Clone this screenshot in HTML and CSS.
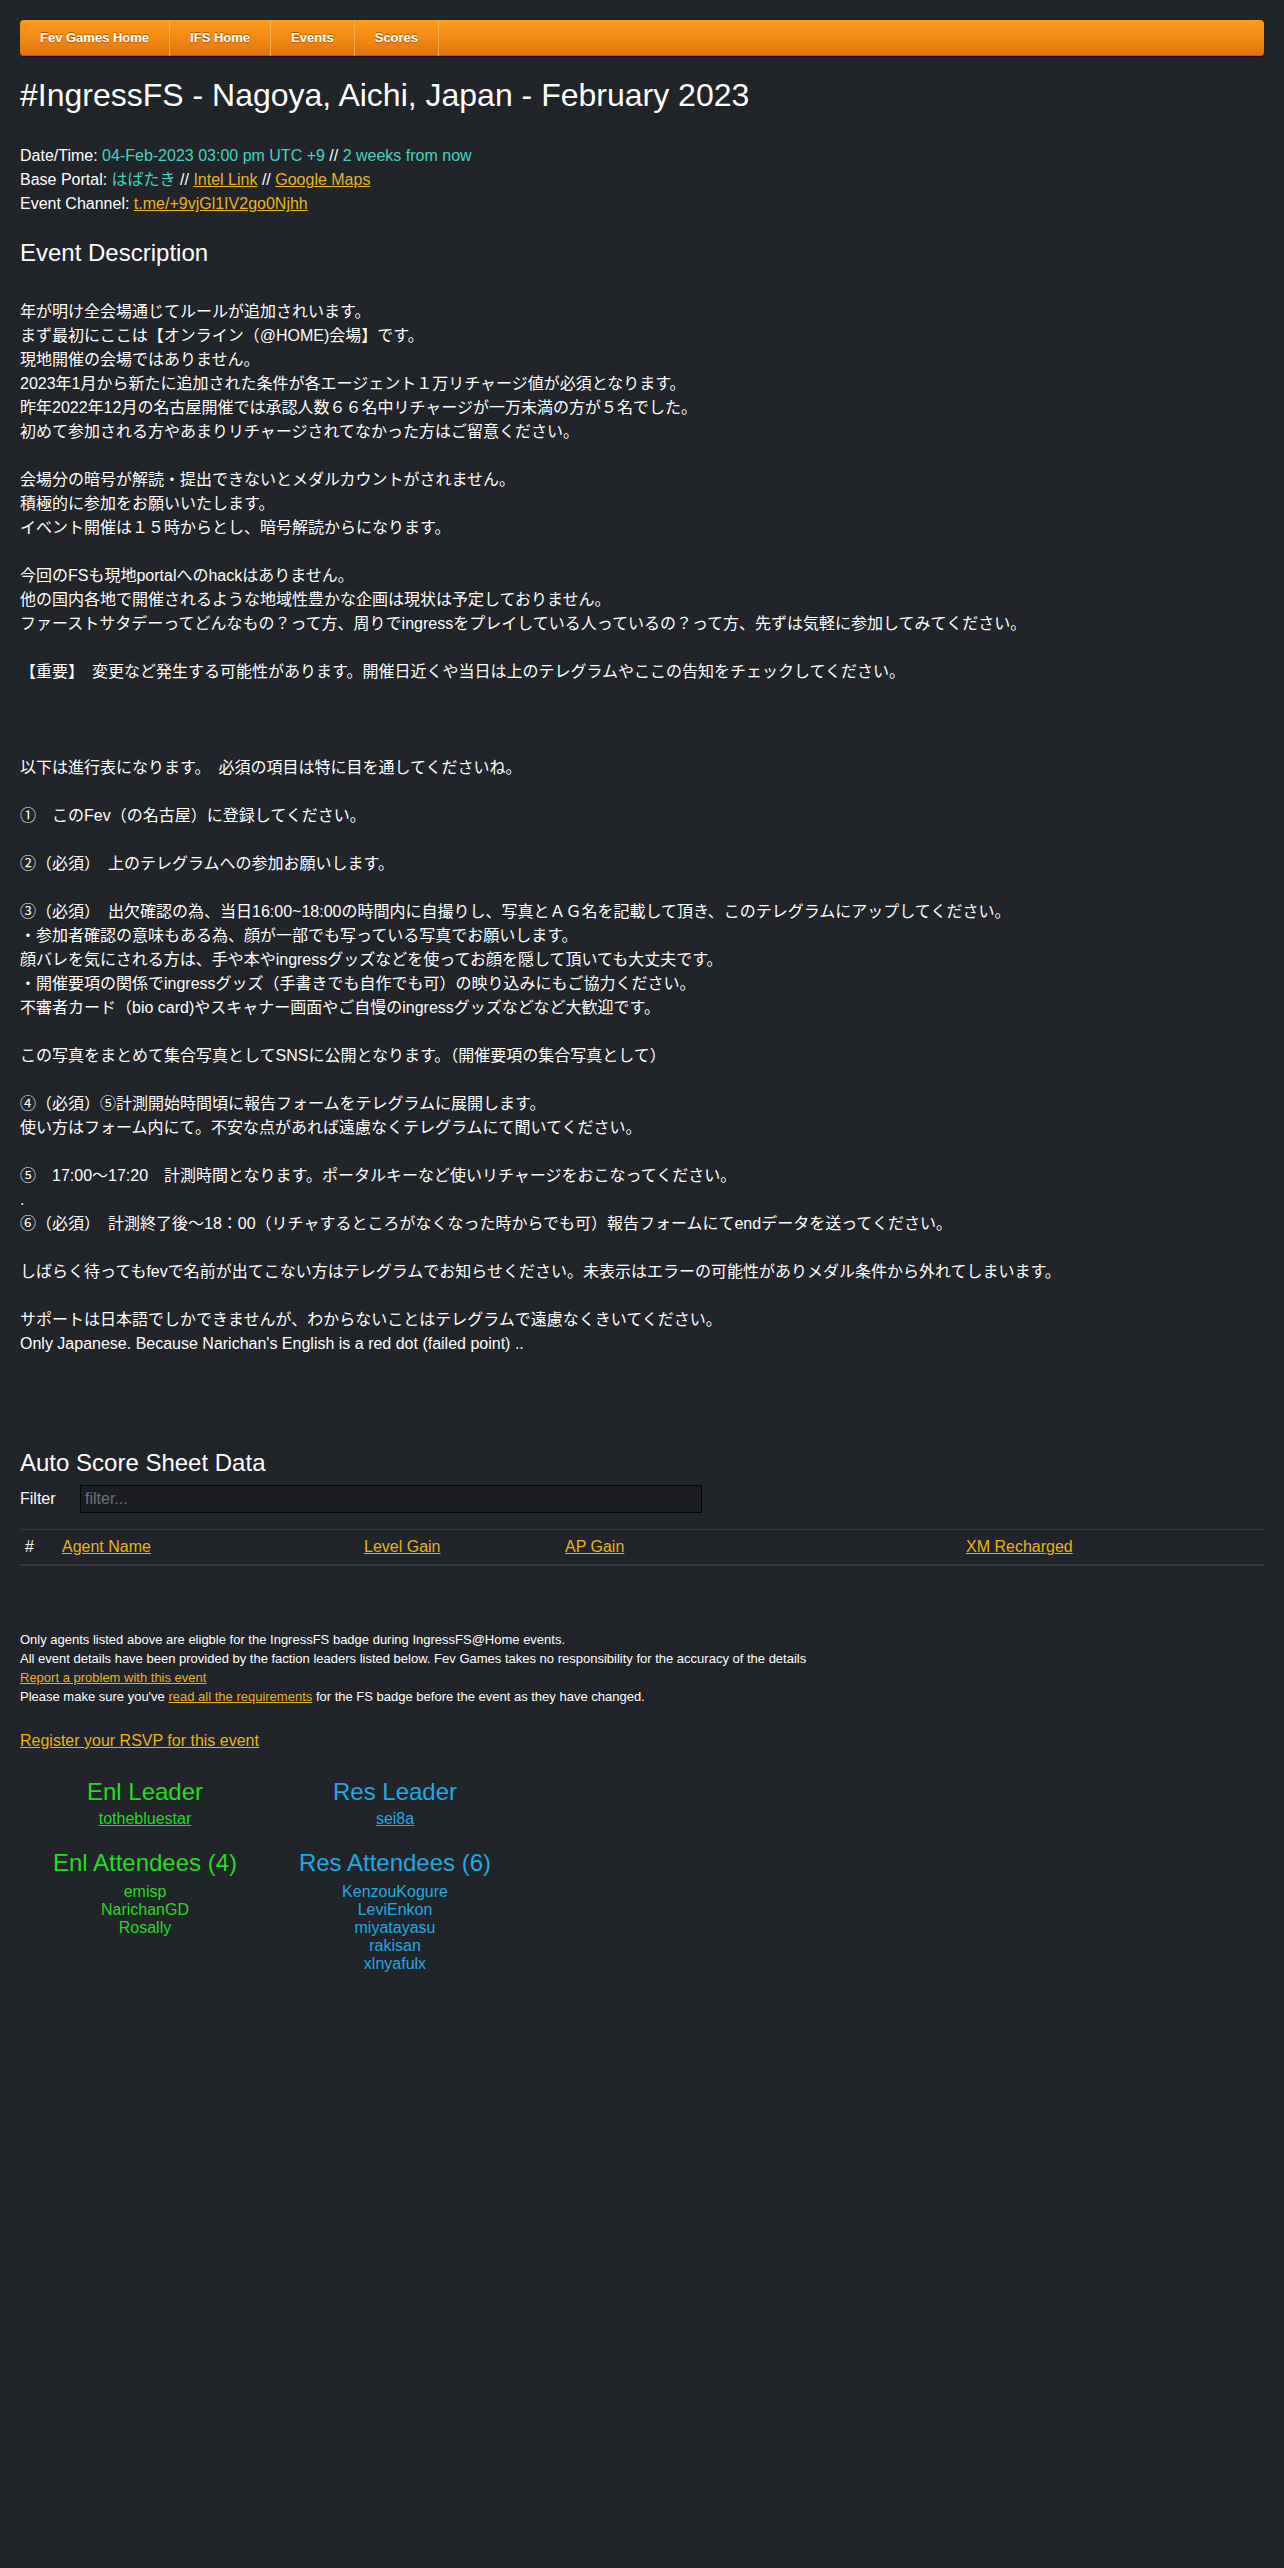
FILE: index.html
```html
<!DOCTYPE html>
<html lang="en">
<head>
<meta charset="utf-8">
<title>#IngressFS - Nagoya, Aichi, Japan - February 2023</title>
<link rel="stylesheet" href="styles.css">
</head>
<body>
<div class="page">
  <nav class="nav">
    <a href="#">Fev Games Home</a>
    <a href="#">IFS Home</a>
    <a href="#">Events</a>
    <a href="#">Scores</a>
  </nav>

  <h1 class="title">#IngressFS - Nagoya, Aichi, Japan - February 2023</h1>

  <div class="info">
    <div>Date/Time: <span class="teal">04-Feb-2023 03:00 pm UTC +9</span> // <span class="teal">2 weeks from now</span></div>
    <div>Base Portal: <span class="teal">はばたき</span> // <a class="link" href="#">Intel Link</a> // <a class="link" href="#">Google Maps</a></div>
    <div>Event Channel: <a class="link" href="#">t.me/+9vjGl1IV2go0Njhh</a></div>
  </div>

  <h3 class="section-title desc-title">Event Description</h3>

  <div class="description">年が明け全会場通じてルールが追加されいます。
まず最初にここは【オンライン（@HOME)会場】です。
現地開催の会場ではありません。
2023年1月から新たに追加された条件が各エージェント１万リチャージ値が必須となります。
昨年2022年12月の名古屋開催では承認人数６６名中リチャージが一万未満の方が５名でした。
初めて参加される方やあまりリチャージされてなかった方はご留意ください。
&#8203;
会場分の暗号が解読・提出できないとメダルカウントがされません。
積極的に参加をお願いいたします。
イベント開催は１５時からとし、暗号解読からになります。
&#8203;
今回のFSも現地portalへのhackはありません。
他の国内各地で開催されるような地域性豊かな企画は現状は予定しておりません。
ファーストサタデーってどんなもの？って方、周りでingressをプレイしている人っているの？って方、先ずは気軽に参加してみてください。
&#8203;
【重要】　変更など発生する可能性があります。開催日近くや当日は上のテレグラムやここの告知をチェックしてください。
&#8203;
&#8203;
&#8203;
以下は進行表になります。　必須の項目は特に目を通してくださいね。
&#8203;
①　このFev（の名古屋）に登録してください。
&#8203;
②（必須）　上のテレグラムへの参加お願いします。
&#8203;
③（必須）　出欠確認の為、当日16:00~18:00の時間内に自撮りし、写真とＡＧ名を記載して頂き、このテレグラムにアップしてください。
・参加者確認の意味もある為、顔が一部でも写っている写真でお願いします。
顔バレを気にされる方は、手や本やingressグッズなどを使ってお顔を隠して頂いても大丈夫です。
・開催要項の関係でingressグッズ（手書きでも自作でも可）の映り込みにもご協力ください。
不審者カード（bio card)やスキャナー画面やご自慢のingressグッズなどなど大歓迎です。
&#8203;
この写真をまとめて集合写真としてSNSに公開となります。（開催要項の集合写真として）
&#8203;
④（必須）⑤計測開始時間頃に報告フォームをテレグラムに展開します。
使い方はフォーム内にて。不安な点があれば遠慮なくテレグラムにて聞いてください。
&#8203;
⑤　17:00～17:20　計測時間となります。ポータルキーなど使いリチャージをおこなってください。
.
⑥（必須）　計測終了後～18：00（リチャするところがなくなった時からでも可）報告フォームにてendデータを送ってください。
&#8203;
しばらく待ってもfevで名前が出てこない方はテレグラムでお知らせください。未表示はエラーの可能性がありメダル条件から外れてしまいます。
&#8203;
サポートは日本語でしかできませんが、わからないことはテレグラムで遠慮なくきいてください。
Only Japanese. Because Narichan's English is a red dot (failed point) ..</div>

  <h3 class="section-title score-title">Auto Score Sheet Data</h3>

  <div class="filter-row">
    <label class="filter-label" for="filter">Filter</label>
    <input class="filter-input" id="filter" type="text" placeholder="filter...">
  </div>

  <table class="score-table">
    <colgroup>
      <col class="c-num"><col class="c-agent"><col class="c-level"><col class="c-ap"><col class="c-xm">
    </colgroup>
    <thead>
      <tr>
        <th>#</th>
        <th><a class="link" href="#">Agent Name</a></th>
        <th><a class="link" href="#">Level Gain</a></th>
        <th><a class="link" href="#">AP Gain</a></th>
        <th><a class="link" href="#">XM Recharged</a></th>
      </tr>
    </thead>
    <tbody></tbody>
  </table>

  <div class="notes">
    <div>Only agents listed above are eligble for the IngressFS badge during IngressFS@Home events.</div>
    <div>All event details have been provided by the faction leaders listed below. Fev Games takes no responsibility for the accuracy of the details</div>
    <div><a class="link" href="#">Report a problem with this event</a></div>
    <div>Please make sure you've <a class="link" href="#">read all the requirements</a> for the FS badge before the event as they have changed.</div>
  </div>

  <div class="rsvp"><a class="link" href="#">Register your RSVP for this event</a></div>

  <div class="factions">
    <div class="faction enl">
      <h3 class="faction-title">Enl Leader</h3>
      <a class="leader" href="#">tothebluestar</a>
      <h3 class="faction-title attendees-title">Enl Attendees (4)</h3>
      <ul class="names">
        <li>emisp</li>
        <li>NarichanGD</li>
        <li>Rosally</li>
      </ul>
    </div>
    <div class="faction res">
      <h3 class="faction-title">Res Leader</h3>
      <a class="leader" href="#">sei8a</a>
      <h3 class="faction-title attendees-title">Res Attendees (6)</h3>
      <ul class="names">
        <li>KenzouKogure</li>
        <li>LeviEnkon</li>
        <li>miyatayasu</li>
        <li>rakisan</li>
        <li>xlnyafulx</li>
      </ul>
    </div>
  </div>
</div>
</body>
</html>
```

FILE: styles.css
```css
html, body {
  margin: 0;
  padding: 0;
}

body {
  background: #212428;
  color: #ffffff;
  font-family: "Liberation Sans", "Noto Sans CJK JP", Arial, sans-serif;
  font-size: 16px;
  line-height: 24px;
}

.page {
  padding: 20px 20px 120px;
}

/* Navigation bar */
.nav {
  display: flex;
  height: 36px;
  border-radius: 4px;
  background: linear-gradient(to bottom, #fd9c1b 0%, #f28a16 50%, #e2730f 100%);
  box-shadow: inset 0 -1px 0 #b85c0a, 0 1px 1px rgba(0, 0, 0, 0.45);
}

.nav a {
  display: block;
  padding: 0 20px;
  border-right: 1px solid #f6ad52;
  color: #ffffff;
  font-family: "Liberation Sans", Arial, sans-serif;
  font-weight: bold;
  font-size: 13px;
  line-height: 36px;
  text-decoration: none;
  text-shadow: 0 -1px 0 rgba(120, 50, 0, 0.6), 0 1px 1px rgba(0, 0, 0, 0.25);
}

/* Title */
.title {
  margin: 20px 0 30px;
  font-size: 32px;
  font-weight: normal;
  line-height: 38.4px;
}

.teal {
  color: #42d4c0;
}

.link {
  color: #e8b41e;
  text-decoration: underline;
}

.section-title {
  margin: 0;
  font-size: 24px;
  font-weight: normal;
  line-height: 28.8px;
}

.desc-title {
  margin-top: 23px;
}

.description {
  margin-top: 32px;
  white-space: pre-line;
}

.score-title {
  margin-top: 93px;
}

/* Filter */
.filter-row {
  display: flex;
  align-items: center;
  margin-top: 7px;
  height: 28px;
}

.filter-label {
  width: 60px;
}

.filter-input {
  box-sizing: border-box;
  width: 622px;
  height: 28px;
  margin: 0;
  padding: 0 4px;
  border: 1px solid #050607;
  background: #1b1d21;
  color: #ffffff;
  font-family: "Liberation Sans", Arial, sans-serif;
  font-size: 16px;
  outline: none;
}

.filter-input::placeholder {
  color: #6c7178;
}

/* Score table */
.score-table {
  width: 100%;
  margin-top: 16px;
  border-collapse: collapse;
  table-layout: fixed;
}

.c-num { width: 37px; }
.c-agent { width: 302px; }
.c-level { width: 201px; }
.c-ap { width: 401px; }
.c-xm { width: 303px; }

.score-table th {
  padding: 5px 5px;
  border-top: 1px solid #363a3f;
  border-bottom: 2px solid #363a3f;
  font-weight: normal;
  text-align: left;
  line-height: 24px;
}

/* Notes */
.notes {
  margin-top: 64px;
  font-size: 13px;
  line-height: 19px;
}

.rsvp {
  margin-top: 23px;
}

/* Factions */
.factions {
  display: grid;
  grid-template-columns: 250px 250px;
  margin-top: 25px;
}

.faction {
  display: flex;
  flex-direction: column;
  align-items: center;
  text-align: center;
}

.faction-title {
  margin: 0;
  font-size: 24px;
  font-weight: normal;
  line-height: 28.8px;
}

.leader {
  line-height: 24px;
  text-decoration: underline;
}

.attendees-title {
  margin-top: 18px;
}

.names {
  list-style: none;
  margin: 5px 0 0;
  padding: 0;
  line-height: 18px;
}

.enl,
.enl .leader {
  color: #22dc22;
}

.res,
.res .leader {
  color: #1eaae2;
}
```
